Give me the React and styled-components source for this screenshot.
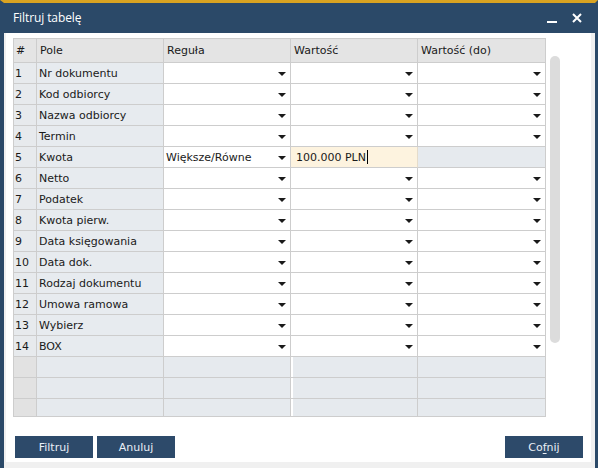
import styled, { createGlobalStyle } from "styled-components";

const GlobalStyle = createGlobalStyle`
  html, body {
    margin: 0;
    padding: 0;
    background: #ffffff;
  }
  body {
    font-family: "DejaVu Sans", Tahoma, sans-serif;
    font-size: 11px;
    color: #1a1a1a;
  }
`;

const fields = [
  "Nr dokumentu",
  "Kod odbiorcy",
  "Nazwa odbiorcy",
  "Termin",
  "Kwota",
  "Netto",
  "Podatek",
  "Kwota pierw.",
  "Data księgowania",
  "Data dok.",
  "Rodzaj dokumentu",
  "Umowa ramowa",
  "Wybierz",
  "BOX",
];

export default function App() {
  return (
    <>
      <GlobalStyle />
      <Window>
        <TitleBar>
          <Title>Filtruj tabelę</Title>
          <TitleButtons>
            <svg width="12" height="12" viewBox="0 0 12 12">
              <rect x="1" y="9" width="10" height="2" fill="#ffffff" />
            </svg>
            <svg width="12" height="12" viewBox="0 0 12 12">
              <path d="M2 2 L10 10 M10 2 L2 10" stroke="#ffffff" strokeWidth="2" />
            </svg>
          </TitleButtons>
        </TitleBar>
        <Body>
          <TableArea>
            <Grid>
              <HeadCell>#</HeadCell>
              <HeadCell $pad>Pole</HeadCell>
              <HeadCell $pad>Reguła</HeadCell>
              <HeadCell $pad>Wartość</HeadCell>
              <HeadCell $pad>Wartość (do)</HeadCell>

              {fields.map((name, i) => {
                const active = name === "Kwota";
                return [
                  <NumCell key={`n${i}`}>{i + 1}</NumCell>,
                  <FieldCell key={`f${i}`}>{name}</FieldCell>,
                  <SelectCell key={`r${i}`}>
                    {active ? "Większe/Równe" : ""}
                    <Arrow />
                  </SelectCell>,
                  active ? (
                    <InputCell key={`v${i}`}>
                      100.000 PLN<Caret />
                    </InputCell>
                  ) : (
                    <SelectCell key={`v${i}`} $gap>
                      <Arrow />
                    </SelectCell>
                  ),
                  active ? (
                    <EmptyCell key={`d${i}`} />
                  ) : (
                    <SelectCell key={`d${i}`}>
                      <Arrow />
                    </SelectCell>
                  ),
                ];
              })}

              {[0, 1, 2].map((r) => [
                <EmptyNum key={`en${r}`} />,
                <EmptyCell key={`e1${r}`} />,
                <EmptyCell key={`e2${r}`} />,
                <EmptyCell key={`e3${r}`} $gap />,
                <EmptyCell key={`e4${r}`} />,
              ])}
            </Grid>
            <ScrollTrack>
              <Thumb />
            </ScrollTrack>
          </TableArea>
          <Footer>
            <ButtonGroup>
              <Button>Filtruj</Button>
              <Button>Anuluj</Button>
            </ButtonGroup>
            <Button>
              Co<u>f</u>nij
            </Button>
          </Footer>
        </Body>
      </Window>
    </>
  );
}

const Window = styled.div`
  width: 598px;
  height: 468px;
  box-sizing: border-box;
  border-top: 3px solid #d9a321;
  border-left: 4px solid #2b4968;
  border-right: 3px solid #2b4968;
  display: flex;
  flex-direction: column;
  background: #2b4968;
  overflow: hidden;
`;

const TitleBar = styled.div`
  height: 30px;
  flex-shrink: 0;
  display: flex;
  align-items: center;
  justify-content: space-between;
  padding: 0 12px 0 9px;
  color: #ffffff;
`;

const Title = styled.span`
  font-family: "Open Sans", "Noto Sans", sans-serif;
  font-size: 12px;
  letter-spacing: -0.1px;
  padding-bottom: 2px;
`;

const TitleButtons = styled.div`
  display: flex;
  gap: 13px;
  align-items: center;
`;

const Body = styled.div`
  flex: 1;
  background: #ffffff;
  border-left: 2px solid #f0f0f0;
  border-right: 4px solid #f0f0f0;
  border-bottom: 6px solid #f0f0f0;
  padding: 5px 0 0 7px;
  display: flex;
  flex-direction: column;
`;

const TableArea = styled.div`
  display: flex;
  gap: 4px;
  align-items: flex-start;
`;

const Grid = styled.div`
  display: grid;
  grid-template-columns: 23px 127px 127px 127px 128px;
  grid-template-rows: 24px repeat(16, 21px) 18px;
  border-top: 1px solid #cdcdcd;
  border-left: 1px solid #cdcdcd;
`;

const Cell = styled.div`
  box-sizing: border-box;
  border-right: 1px solid #cdcdcd;
  border-bottom: 1px solid #cdcdcd;
  display: flex;
  align-items: center;
  padding-left: 3px;
  white-space: nowrap;
  overflow: hidden;
  position: relative;
  box-shadow: ${(p) => (p.$gap ? "inset 2px 0 0 #ffffff" : "none")};
`;

const HeadCell = styled(Cell)`
  background: #e4e4e4;
  align-items: flex-start;
  padding-top: 5px;
  padding-left: ${(p) => (p.$pad ? "3px" : "2px")};
`;

const NumCell = styled(Cell)`
  background: #e7eaed;
  padding-left: 1px;
`;

const FieldCell = styled(Cell)`
  background: #e7ebef;
  padding-left: 2px;
`;

const SelectCell = styled(Cell)`
  background: #ffffff;
  padding-left: 2px;
`;

const InputCell = styled(Cell)`
  background: #fdf3df;
  padding-left: 5px;
  border-right-color: #e5dccb;
`;

const EmptyCell = styled(Cell)`
  background: #e6eaee;
`;

const EmptyNum = styled(Cell)`
  background: #e2e2e2;
`;

const Arrow = styled.span`
  position: absolute;
  right: 4px;
  top: 50%;
  margin-top: -1px;
  width: 0;
  height: 0;
  border-left: 4px solid transparent;
  border-right: 4px solid transparent;
  border-top: 4px solid #1a1a1a;
`;

const Caret = styled.span`
  display: inline-block;
  width: 1px;
  height: 14px;
  background: #000000;
  margin-left: 1px;
`;

const ScrollTrack = styled.div`
  padding-top: 18px;
`;

const Thumb = styled.div`
  width: 10px;
  height: 287px;
  border-radius: 5px;
  background: #dcdcdc;
`;

const Footer = styled.div`
  display: flex;
  justify-content: space-between;
  padding: 19px 8px 0 2px;
`;

const ButtonGroup = styled.div`
  display: flex;
  gap: 4px;
`;

const Button = styled.button`
  width: 78px;
  height: 22px;
  border: none;
  background: #2d4a6a;
  color: #e9eff6;
  font-family: "DejaVu Sans", Tahoma, sans-serif;
  font-size: 11px;
  padding: 0;
  cursor: pointer;
  u {
    text-underline-offset: 2px;
  }
`;
